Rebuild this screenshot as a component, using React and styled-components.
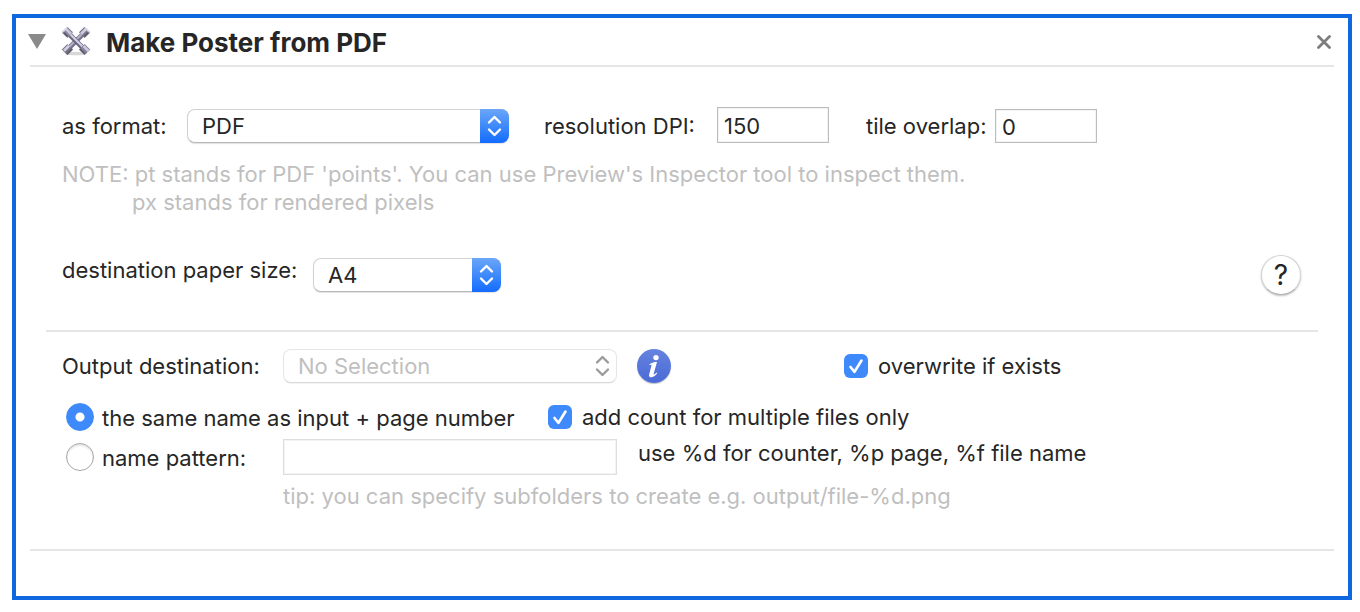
import React from 'react';
import styled, { createGlobalStyle } from 'styled-components';

const GlobalStyle = createGlobalStyle`
  *, *::before, *::after { box-sizing: border-box; }
  body {
    margin: 0;
    background: #fff;
    color: #262626;
    font-family: Inter, "Liberation Sans", sans-serif;
    font-size: 22px;
    line-height: 28px;
  }
  input, select, button { font: inherit; color: inherit; margin: 0; }
`;

const Page = styled.main`
  padding: 14px 8px 12px 12px;
`;

const Panel = styled.section`
  border: 4px solid #1068e0;
  padding: 0 14px 45px;
`;

const Header = styled.header`
  display: flex;
  align-items: center;
  height: 49px;
  border-bottom: 2px solid #e5e5e5;
`;

const IconButton = styled.button`
  display: flex;
  align-items: center;
  justify-content: center;
  width: 20px;
  height: 20px;
  padding: 0;
  border: 0;
  background: none;
`;

const Disclosure = styled(IconButton)`
  margin: 0 14px 0 -3px;
`;

const Title = styled.h1`
  flex: 1;
  margin: 0 0 0 15px;
  padding-top: 2px;
  font-size: 26px;
  line-height: 32px;
  font-weight: 700;
`;

const Body = styled.div`
  padding: 0 16px;
  border-bottom: 2px solid #e5e5e5;
`;

const Group = styled.div`
  padding: ${(p) => p.$pad};
  & + & { border-top: 2px solid #e5e5e5; }
`;

const Row = styled.div`
  display: flex;
  align-items: ${(p) => p.$align || 'center'};
  height: ${(p) => p.$height || 36}px;
  margin-top: ${(p) => p.$top || 0}px;
`;

const Label = styled.label`
  flex: none;
  align-self: ${(p) => (p.$high ? 'flex-start' : 'auto')};
  width: ${(p) => (p.$width ? `${p.$width}px` : 'auto')};
  margin-left: ${(p) => p.$gap || 0}px;
  line-height: ${(p) => p.$line || 34}px;
  white-space: nowrap;
`;

const RadioLabel = styled(Label)`
  padding-top: 2px;
`;

const Hint = styled.p`
  margin: ${(p) => p.$margin};
  color: #bfbfbf;
`;

const Indented = styled.span`
  display: block;
  padding-left: 70px;
`;

const SelectBox = styled.div`
  position: relative;
  flex: none;
  width: ${(p) => p.$width}px;
  height: 34px;
`;

const Select = styled.select`
  appearance: none;
  display: block;
  width: 100%;
  height: 34px;
  padding: 0 40px 0 14px;
  border: 1px solid #d2d2d2;
  border-bottom-color: #b8b8b8;
  border-radius: 8px;
  background: #fff;
  box-shadow: 0 1px 1px rgba(0, 0, 0, 0.12);
  &:disabled {
    border-color: #e6e6e6;
    border-bottom-color: #dadada;
    color: #bfbfbf;
    opacity: 1;
    box-shadow: 0 1px 1px rgba(0, 0, 0, 0.05);
  }
`;

const Cap = styled.span`
  position: absolute;
  inset: 0 0 0 auto;
  display: flex;
  align-items: center;
  justify-content: center;
  width: 29px;
  border-radius: 0 8px 8px 0;
  color: ${(p) => (p.$off ? '#9b9b9b' : '#fff')};
  background: ${(p) => (p.$off ? 'none' : 'linear-gradient(#6ba6f8, #3f8afa 50%, #136cff)')};
  pointer-events: none;
`;

const TextField = styled.input`
  flex: none;
  width: ${(p) => p.$width}px;
  height: ${(p) => p.$height || 36}px;
  padding: 2px 6px 0;
  border: 1px solid ${(p) => (p.$light ? '#dedede' : '#bcbcbc')};
  border-radius: 0;
  background: #fff;
  box-shadow: inset 0 0 0 1px #f3f3f3;
`;

const CheckStack = styled.span`
  display: grid;
  flex: none;
  width: 24px;
  height: 24px;
  margin-left: ${(p) => p.$gap || 0}px;
  > * { grid-area: 1 / 1; }
  > svg { pointer-events: none; }
`;

const Tick = styled.input`
  appearance: none;
  width: 24px;
  height: 24px;
  border-radius: 6px;
  background: #3f8afa;
`;

const Radio = styled.input`
  appearance: none;
  flex: none;
  width: 28px;
  height: 28px;
  border-radius: 50%;
  border: 1px solid #a6a6a6;
  background: #fff;
  box-shadow: inset 0 2px 2px rgba(0, 0, 0, 0.1);
  &:checked {
    border-color: #3f8afa;
    background: radial-gradient(circle, #fff 4px, #3f8afa 5px);
    box-shadow: none;
  }
`;

const Choice = styled(Row)`
  padding-left: 4px;
`;

const Help = styled.button`
  width: 40px;
  height: 40px;
  margin: 0 17px 0 auto;
  padding: 0;
  border: 1px solid #d4d4d4;
  border-bottom-color: #b4b4b4;
  border-radius: 50%;
  background: #fff;
  box-shadow: 0 1px 2px rgba(0, 0, 0, 0.25);
  font-size: 28px;
  line-height: 36px;
`;

const Info = styled.button`
  width: 34px;
  height: 34px;
  margin-left: 20px;
  padding: 0;
  border: 0;
  border-radius: 50%;
  background: linear-gradient(#6683df, #4a6ad6);
  box-shadow: 0 1px 1px rgba(0, 0, 0, 0.25);
`;

const Arrows = () => (
  <svg width="15" height="22" viewBox="0 0 15 22" fill="none" stroke="currentColor" strokeWidth="2.4" strokeLinecap="round" strokeLinejoin="round" aria-hidden="true">
    <path d="M2 7.500 7.500 2l5.500 5.500M2 14.500 7.500 20l5.500-5.500" />
  </svg>
);

const InfoMark = () => (
  <svg width="34" height="34" viewBox="0 0 34 34" aria-hidden="true">
    <circle cx="19" cy="8.600" r="2.700" fill="#fff" />
    <path d="M12.500 15.200c2.400-1.700 4.500-2.300 7.500-2.300l-3.300 11.800c-.3 1.400.5 1.300 2.700-1.200l.8.8c-3.300 4.800-9.200 5.500-8 .9l2.300-8.800c.2-.8-.5-.9-1.900-.2z" fill="#fff" />
  </svg>
);

const Tools = () => (
  <svg width="30" height="30" viewBox="0 0 30 30" aria-hidden="true">
    <ellipse cx="15" cy="26.500" rx="11" ry="1.800" fill="#d8d8d8" />
    <g fill="none">
      <path d="M23 6 7 22" stroke="#77738f" strokeWidth="4.800" />
      <path d="M22.500 5.500 6.500 21.500" stroke="#b7b4c8" strokeWidth="1.800" />
      <path d="m20.800 8.200 5.400-5.400M9.200 19.800l-5.600 5.600" stroke="#77758a" strokeWidth="8" />
      <path d="m20 7 5-5M8 18.800l-5 5" stroke="#cfcee0" strokeWidth="2.800" />
      <path d="m23.400 9.500 5-5M11.200 21.800l-5 5" stroke="#5c5a66" strokeWidth="1.600" />
      <path d="m7 6 16 16" stroke="#6b6882" strokeWidth="5" />
      <path d="m7.700 5.700 16 16" stroke="#d2d0e2" strokeWidth="2.200" />
      <path d="m9.200 8.200-5.400-5.400M20.800 19.800l5.600 5.600" stroke="#85839b" strokeWidth="8" />
      <path d="M10 7 5 2M22.500 19l5 5" stroke="#c9c8dc" strokeWidth="2.800" />
      <path d="m6.600 9.500-5-5M18.800 21.800l5 5" stroke="#5c5a66" strokeWidth="1.600" />
      <path d="m1.300 5.400 4.600-4.500M24.100.9l4.600 4.500" stroke="#d5d4df" strokeWidth="1.800" />
    </g>
  </svg>
);

function PopUp({ id, width, disabled, children }) {
  return (
    <SelectBox $width={width}>
      <Select id={id} disabled={disabled}>
        <option>{children}</option>
      </Select>
      <Cap $off={disabled}><Arrows /></Cap>
    </SelectBox>
  );
}

function CheckBox({ id, gap }) {
  return (
    <CheckStack $gap={gap}>
      <Tick type="checkbox" id={id} defaultChecked />
      <svg width="24" height="24" viewBox="0 0 24 24" fill="none" stroke="#fff" strokeWidth="2.6" strokeLinecap="round" strokeLinejoin="round" aria-hidden="true">
        <path d="m6.500 13 4 4.800L17.500 6.500" />
      </svg>
    </CheckStack>
  );
}

export default function App() {
  return (
    <>
      <GlobalStyle />
      <Page>
        <Panel>
          <Header>
            <Disclosure type="button" aria-label="Collapse">
              <svg width="18" height="15" viewBox="0 0 18 15" aria-hidden="true">
                <path d="M0 0h18L9 15z" fill="#8a8a8a" />
              </svg>
            </Disclosure>
            <Tools />
            <Title>Make Poster from PDF</Title>
            <IconButton type="button" aria-label="Close">
              <svg width="14" height="14" viewBox="0 0 14 14" stroke="#7d7d7d" strokeWidth="2.800" strokeLinecap="round" aria-hidden="true">
                <path d="m1.500 1.500 11 11M12.500 1.500l-11 11" />
              </svg>
            </IconButton>
          </Header>

          <Body>
            <Group $pad="40px 0 35px 16px">
              <Row $align="flex-end">
                <Label htmlFor="format" $width={125}>as format:</Label>
                <PopUp id="format" width={322}>PDF</PopUp>
                <Label htmlFor="dpi" $width={173} $gap={35}>resolution DPI:</Label>
                <TextField id="dpi" defaultValue="150" $width={112} />
                <Label htmlFor="overlap" $width={129} $gap={37}>tile overlap:</Label>
                <TextField id="overlap" defaultValue="0" $width={102} $height={34} />
              </Row>
              <Hint $margin="17px 0 0">
                NOTE: pt stands for PDF 'points'. You can use Preview's Inspector tool to inspect them.
                <Indented>px stands for rendered pixels</Indented>
              </Hint>
              <Row $height={40} $top={39}>
                <Label htmlFor="paper" $width={251} $line={30} $high>destination paper size:</Label>
                <PopUp id="paper" width={188}>A4</PopUp>
                <Help type="button" aria-label="Help">?</Help>
              </Row>
            </Group>

            <Group $pad="16px 0 39px 16px">
              <Row>
                <Label htmlFor="destination" $width={221}>Output destination:</Label>
                <PopUp id="destination" width={334} disabled>No Selection</PopUp>
                <Info type="button" aria-label="Information"><InfoMark /></Info>
                <CheckBox id="overwrite" gap={173} />
                <Label htmlFor="overwrite" $gap={10}>overwrite if exists</Label>
              </Row>
              <Choice $top={15}>
                <Radio type="radio" name="naming" id="same" defaultChecked />
                <RadioLabel htmlFor="same" $width={446} $gap={8}>the same name as input + page number</RadioLabel>
                <CheckBox id="count" />
                <Label htmlFor="count" $gap={10}>add count for multiple files only</Label>
              </Choice>
              <Choice $top={4}>
                <Radio type="radio" name="naming" id="pattern" />
                <RadioLabel htmlFor="pattern" $width={181} $gap={8}>name pattern:</RadioLabel>
                <TextField id="pattern-text" aria-label="Name pattern" $width={334} $light />
                <Label htmlFor="pattern-text" $line={28} $gap={21} $high>use %d for counter, %p page, %f file name</Label>
              </Choice>
              <Hint $margin="7px 0 0 221px">tip: you can specify subfolders to create e.g. output/file-%d.png</Hint>
            </Group>
          </Body>
        </Panel>
      </Page>
    </>
  );
}
